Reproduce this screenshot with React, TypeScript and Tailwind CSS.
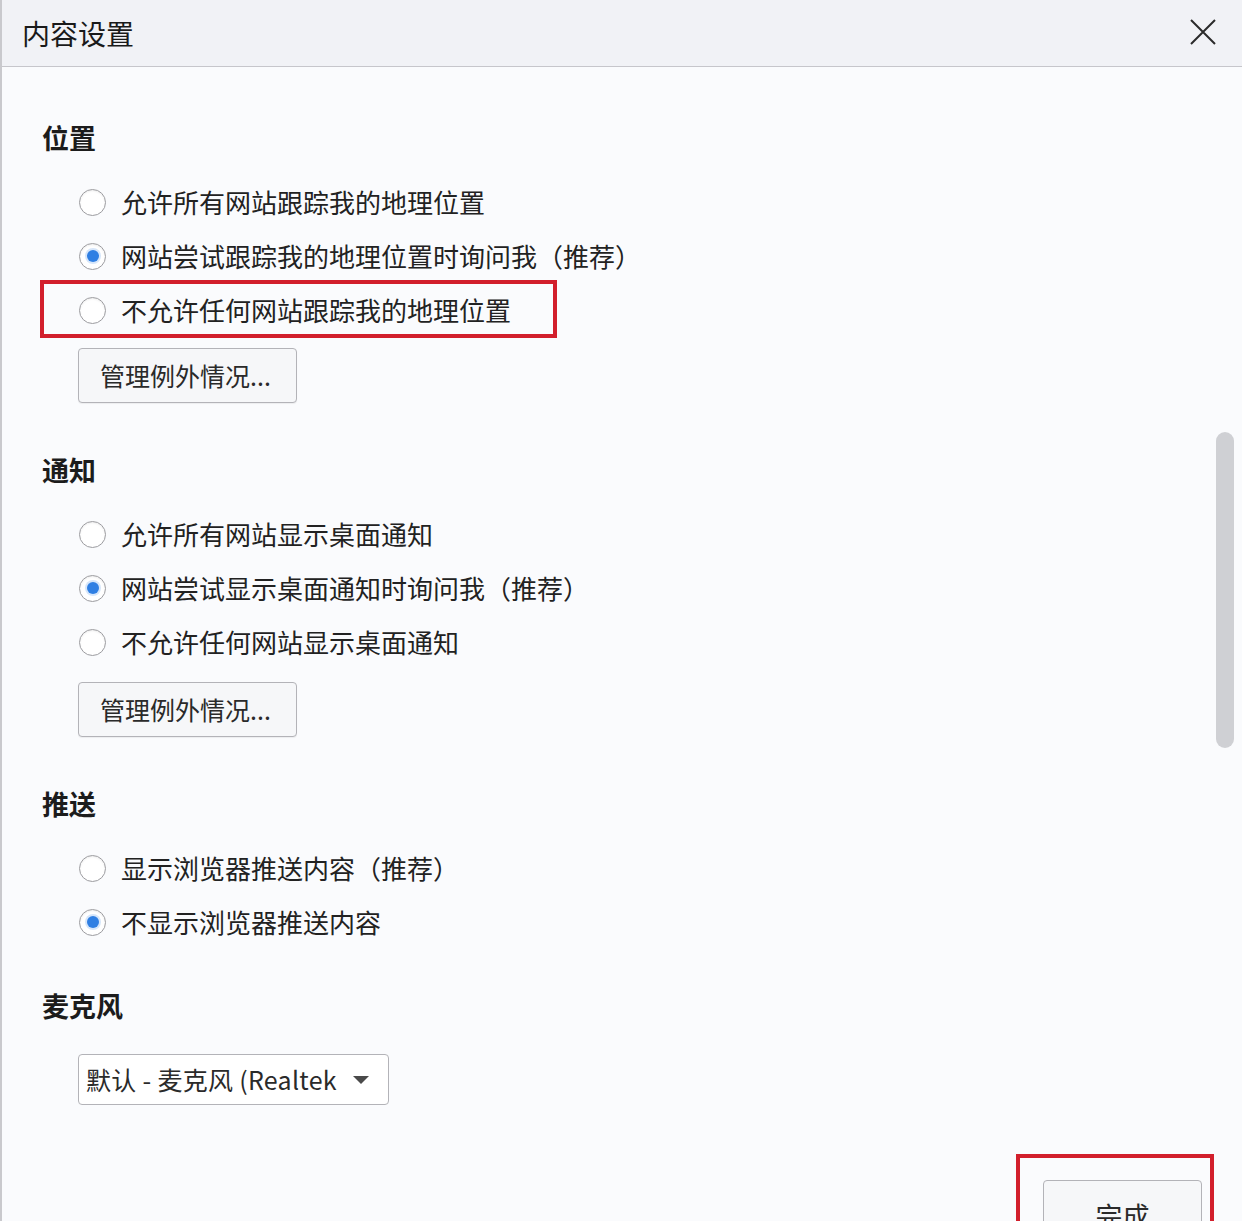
const font = { fontFamily: '"Noto Sans CJK SC", "Noto Sans", sans-serif' }

function Radio({ label, checked, marked }: { label: string; checked?: boolean; marked?: boolean }) {
  return (
    <div className="relative flex items-center h-[54px] pl-[37px]">
      {marked && (
        <div className="absolute left-[-2px] top-[-3px] w-[517px] h-[58px] border-[4px] border-[#d21f2c]" />
      )}
      <span className="flex items-center justify-center w-[27px] h-[27px] rounded-full border-[1.5px] border-[#9c9ca0] bg-white shadow-[inset_0_1px_2px_rgba(0,0,0,0.08)]">
        {checked && <span className="w-[12px] h-[12px] rounded-full bg-[#2f7fe3] shadow-[0_0_0_2px_#d6e6fa]" />}
      </span>
      <span className="ml-[15px] text-[26px] leading-none text-[#222]">{label}</span>
    </div>
  )
}

function Heading({ children }: { children: string }) {
  return <h2 className="text-[27px] leading-[32px] font-bold text-[#1c1c1c]">{children}</h2>
}

function ManageButton() {
  return (
    <button className="ml-[36px] w-[219px] h-[55px] rounded-[4px] border border-[#b3b3b8] bg-[#f6f7f9] text-left pl-[21px] text-[25px] text-[#2a2a2a] shadow-[0_1px_1px_rgba(0,0,0,0.06)]">
      管理例外情况...
    </button>
  )
}

export default function App() {
  return (
    <div style={font} className="relative w-[1242px] h-[1221px] overflow-hidden bg-[#fafbfd] border-l-2 border-[#c9c9cd]">
      <div className="flex items-center justify-between h-[67px] bg-[#f1f2f6] border-b border-[#c6c6cb] pl-[20px] pr-[26px]">
        <span className="text-[28px] text-[#1a1a1a] leading-none">内容设置</span>
        <svg width="26" height="26" viewBox="0 0 26 26" className="mt-[-2px]">
          <path d="M1 1 L25 25 M25 1 L1 25" stroke="#2b2b2b" strokeWidth="2" />
        </svg>
      </div>

      <div className="flex">
        <div className="flex-1 flex flex-col items-start pl-[40px] pt-[55px]">
          <Heading>位置</Heading>
          <div className="mt-[21px]">
            <Radio label="允许所有网站跟踪我的地理位置" />
            <Radio label="网站尝试跟踪我的地理位置时询问我（推荐）" checked />
            <Radio label="不允许任何网站跟踪我的地理位置" marked />
          </div>
          <div className="mt-[11px]">
            <ManageButton />
          </div>

          <div className="mt-[51px]">
            <Heading>通知</Heading>
          </div>
          <div className="mt-[21px]">
            <Radio label="允许所有网站显示桌面通知" />
            <Radio label="网站尝试显示桌面通知时询问我（推荐）" checked />
            <Radio label="不允许任何网站显示桌面通知" />
          </div>
          <div className="mt-[13px]">
            <ManageButton />
          </div>

          <div className="mt-[51px]">
            <Heading>推送</Heading>
          </div>
          <div className="mt-[21px]">
            <Radio label="显示浏览器推送内容（推荐）" />
            <Radio label="不显示浏览器推送内容" checked />
          </div>

          <div className="mt-[41px]">
            <Heading>麦克风</Heading>
          </div>
          <div className="mt-[32px] ml-[36px] flex items-center w-[311px] h-[51px] rounded-[4px] border border-[#b3b3b8] bg-white pl-[7px]">
            <span className="text-[25px] text-[#2a2a2a] leading-none whitespace-nowrap tracking-[0.3px]">默认 - 麦克风 (Realtek</span>
            <svg width="16" height="10" viewBox="0 0 16 10" className="ml-[16px]">
              <path d="M0 1 L16 1 L8 9 Z" fill="#4a4a4a" />
            </svg>
          </div>

          <div className="self-end mr-[-2px] mt-[49px] relative">
            <div className="absolute left-[-27px] top-[0px] w-[198px] h-[80px] border-[4px] border-[#d21f2c] border-b-0" />
            <button className="mt-[26px] mr-[16px] w-[159px] h-[60px] rounded-[4px] border border-[#b3b3b8] bg-[#f6f7f9] text-[27px] text-[#2a2a2a] pt-[12px]">
              完成
            </button>
          </div>
        </div>
        <div className="w-[26px] pt-[365px] pr-[8px]">
          <div className="w-[18px] h-[316px] rounded-full bg-[#cfd0d4]" />
        </div>
      </div>
    </div>
  )
}
